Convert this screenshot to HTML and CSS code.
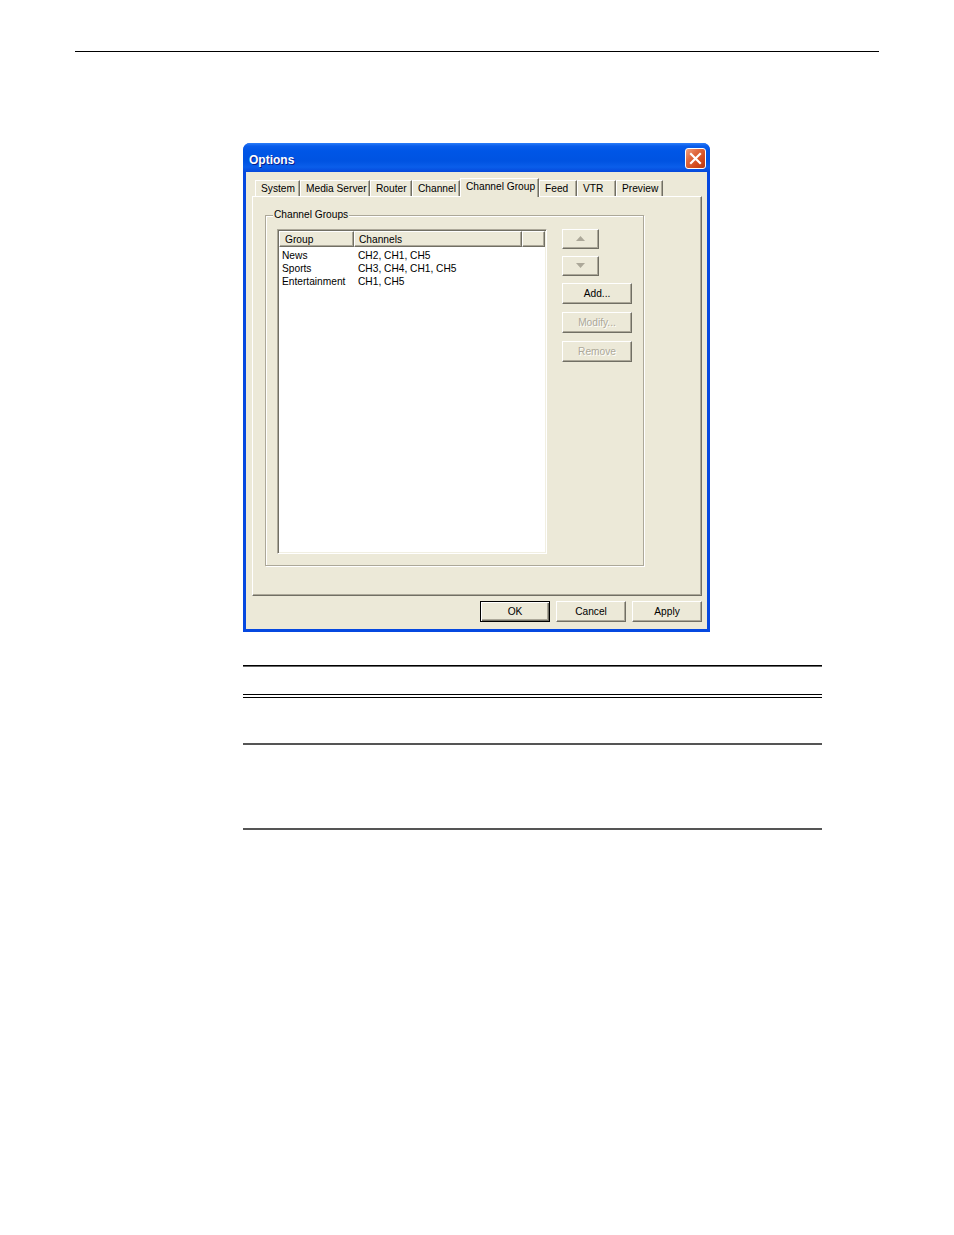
FILE: index.html
```html
<!DOCTYPE html>
<html>
<head>
<meta charset="utf-8">
<title>Options</title>
<link rel="stylesheet" href="styles.css">
</head>
<body>
<div class="top-rule"></div>

<div class="window">
  <div class="titlebar">
    <span class="title">Options</span>
    <span class="close">
      <svg width="13" height="13" viewBox="0 0 13 13"><path d="M2 2 L11 11 M11 2 L2 11" stroke="#fff" stroke-width="2.2" stroke-linecap="square"/></svg>
    </span>
  </div>
  <div class="body">
    <div class="tabs">
      <span class="tab w-system">System</span>
      <span class="tab w-media">Media Server</span>
      <span class="tab w-router">Router</span>
      <span class="tab w-channel">Channel</span>
      <span class="tab tab-active w-group">Channel Group</span>
      <span class="tab w-feed">Feed</span>
      <span class="tab w-vtr">VTR</span>
      <span class="tab w-preview">Preview</span>
    </div>
    <div class="panel">
      <div class="groupbox">
        <span class="legend">Channel Groups</span>
        <div class="listview">
          <div class="lv-header">
            <span class="hcell c-group">Group</span>
            <span class="hcell c-channels">Channels</span>
            <span class="hcell c-rest"></span>
          </div>
          <div class="lv-rows">
            <div class="row"><span class="cell c-group">News</span><span class="cell c-channels">CH2, CH1, CH5</span></div>
            <div class="row"><span class="cell c-group">Sports</span><span class="cell c-channels">CH3, CH4, CH1, CH5</span></div>
            <div class="row"><span class="cell c-group">Entertainment</span><span class="cell c-channels">CH1, CH5</span></div>
          </div>
        </div>
        <div class="side-buttons">
          <span class="btn btn-arrow"><svg width="9" height="5" viewBox="0 0 9 5"><path d="M4.5 0 L9 5 L0 5 Z" fill="#ACA899"/></svg></span>
          <span class="btn btn-arrow"><svg width="9" height="5" viewBox="0 0 9 5"><path d="M0 0 L9 0 L4.5 5 Z" fill="#ACA899"/></svg></span>
          <span class="btn btn-wide">Add...</span>
          <span class="btn btn-wide btn-disabled">Modify...</span>
          <span class="btn btn-wide btn-disabled">Remove</span>
        </div>
      </div>
    </div>
    <div class="footer">
      <span class="btn btn-foot btn-default">OK</span>
      <span class="btn btn-foot">Cancel</span>
      <span class="btn btn-foot">Apply</span>
    </div>
  </div>
</div>

<div class="rules">
  <div class="rule rule-a"></div>
  <div class="rule rule-double"></div>
  <div class="rule rule-b"></div>
  <div class="rule rule-c"></div>
</div>
</body>
</html>
```

FILE: styles.css
```css
* { box-sizing: border-box; }

html, body {
  margin: 0;
  padding: 0;
  background: #fff;
}

body {
  font-family: "Liberation Sans", Arial, sans-serif;
  font-size: 10.2px;
  color: #000;
  width: 954px;
  height: 1235px;
  overflow: hidden;
}

.top-rule {
  margin: 51px 0 0 75px;
  width: 804px;
  height: 1px;
  background: #000;
}

/* ---------- window ---------- */
.window {
  margin: 91px 0 0 243px;
  width: 467px;
  height: 489px;
  display: flex;
  flex-direction: column;
  background: #0548E0;
  border-radius: 7px 7px 0 0;
  overflow: hidden;
}

.titlebar {
  height: 29px;
  flex: none;
  display: flex;
  align-items: center;
  justify-content: space-between;
  padding: 0 4px 0 6px;
  background: linear-gradient(#2D7FF9 0px, #0A5DEB 3px, #0056E6 8px, #0053E1 18px, #0A5EEA 24px, #0548DB 29px);
}

.title {
  font-family: "Liberation Sans", Arial, sans-serif;
  font-weight: bold;
  font-size: 12px;
  color: #fff;
  text-shadow: 1px 1px 0 #0A1E8C;
  padding-top: 4px;
}

.close {
  width: 21px;
  height: 21px;
  margin-top: 1px;
  border: 1px solid #fff;
  border-radius: 3px;
  background: linear-gradient(135deg, #F0A080 0%, #E06A40 35%, #D24A1C 70%, #B43A14 100%);
  display: flex;
  align-items: center;
  justify-content: center;
}

.body {
  flex: 1;
  margin: 0 3px 3px 3px;
  background: #ECE9D8;
  padding: 6px 5px 0 6px;
  display: flex;
  flex-direction: column;
}

/* ---------- tabs ---------- */
.tabs {
  height: 18px;
  flex: none;
  display: flex;
  align-items: flex-end;
  padding-left: 3px;
  position: relative;
  z-index: 1;
}

.tab {
  height: 16px;
  display: flex;
  align-items: center;
  justify-content: flex-start;
  padding-left: 5px;
  background: #ECE9D8;
  border-top: 1px solid #fff;
  border-left: 1px solid #fff;
  border-right: 1px solid #716F64;
  box-shadow: inset -1px 0 0 #ACA899;
  white-space: nowrap;
  padding-bottom: 1px;
}

.tab-active {
  height: 19px;
  margin-bottom: -1px;
  padding-bottom: 3px;
}

.w-system { width: 45px; }
.w-media { width: 70px; }
.w-router { width: 42px; }
.w-channel { width: 48px; }
.w-group { width: 79px; }
.w-feed { width: 38px; }
.w-vtr { width: 39px; }
.w-preview { width: 47px; }

/* ---------- panel ---------- */
.panel {
  height: 400px;
  flex: none;
  border-top: 1px solid #fff;
  border-left: 1px solid #fff;
  border-right: 1px solid #716F64;
  border-bottom: 1px solid #716F64;
  box-shadow: inset -1px -1px 0 #ACA899;
  padding: 18px 0 0 12px;
}

.groupbox {
  position: relative;
  width: 379px;
  height: 351px;
  border: 1px solid #ACA899;
  box-shadow: 1px 1px 0 #fff, inset 1px 1px 0 #fff;
  padding: 13px 0 0 11px;
  display: flex;
  gap: 15px;
}

.legend {
  position: absolute;
  left: 7px;
  top: -7px;
  padding: 0 1px;
  line-height: 12px;
  background: #ECE9D8;
}

/* ---------- list view ---------- */
.listview {
  width: 270px;
  height: 325px;
  background: #fff;
  border-style: solid;
  border-width: 1px;
  border-color: #ACA899 #fff #fff #ACA899;
  box-shadow: inset 1px 1px 0 #716F64, inset -1px -1px 0 #F1EFE2;
  padding: 1px;
  display: flex;
  flex-direction: column;
}

.lv-header {
  display: flex;
  height: 16px;
  flex: none;
}

.hcell {
  height: 16px;
  background: #ECE9D8;
  border-top: 1px solid #fff;
  border-left: 1px solid #fff;
  border-right: 1px solid #716F64;
  border-bottom: 1px solid #716F64;
  box-shadow: inset -1px -1px 0 #ACA899;
  display: flex;
  align-items: center;
  padding-left: 5px;
  white-space: nowrap;
}

.hcell.c-group { width: 75px; }
.hcell.c-channels { width: 168px; padding-left: 4px; }
.hcell.c-rest { flex: 1; }

.lv-rows {
  padding-top: 2px;
}

.row {
  display: flex;
  height: 13px;
  align-items: center;
  white-space: nowrap;
}

.cell.c-group { width: 77px; padding-left: 3px; }
.cell.c-channels { padding-left: 2px; }

/* ---------- buttons ---------- */
.side-buttons {
  display: flex;
  flex-direction: column;
  align-items: flex-start;
}

.btn {
  display: flex;
  align-items: center;
  justify-content: center;
  background: #ECE9D8;
  border-top: 1px solid #fff;
  border-left: 1px solid #fff;
  border-right: 1px solid #716F64;
  border-bottom: 1px solid #716F64;
  box-shadow: inset -1px -1px 0 #ACA899;
  white-space: nowrap;
}

.btn-arrow {
  width: 37px;
  height: 20px;
  margin-bottom: 7px;
  padding-bottom: 1px;
}

.btn-wide {
  width: 70px;
  height: 21px;
  margin-bottom: 8px;
}

.btn-disabled {
  color: #ACA899;
  text-shadow: 1px 1px 0 #fff;
}

.footer {
  display: flex;
  justify-content: flex-end;
  gap: 6px;
  margin-top: 5px;
}

.btn-foot {
  width: 70px;
  height: 21px;
}

.btn-default {
  border: 1px solid #000;
  box-shadow: inset 1px 1px 0 #fff, inset -1px -1px 0 #716F64, inset -2px -2px 0 #ACA899;
}

/* ---------- rules ---------- */
.rules {
  margin-left: 243px;
  width: 579px;
}

.rule-a {
  margin-top: 33px;
  height: 2px;
  border-top: 1px solid #000;
  background: #666;
}

.rule-double {
  margin-top: 27px;
  height: 4px;
  border-top: 1px solid #000;
  border-bottom: 1px solid #000;
}

.rule-b {
  margin-top: 45px;
  height: 2px;
  background: #555;
}

.rule-c {
  margin-top: 83px;
  height: 2px;
  background: #555;
}
```
